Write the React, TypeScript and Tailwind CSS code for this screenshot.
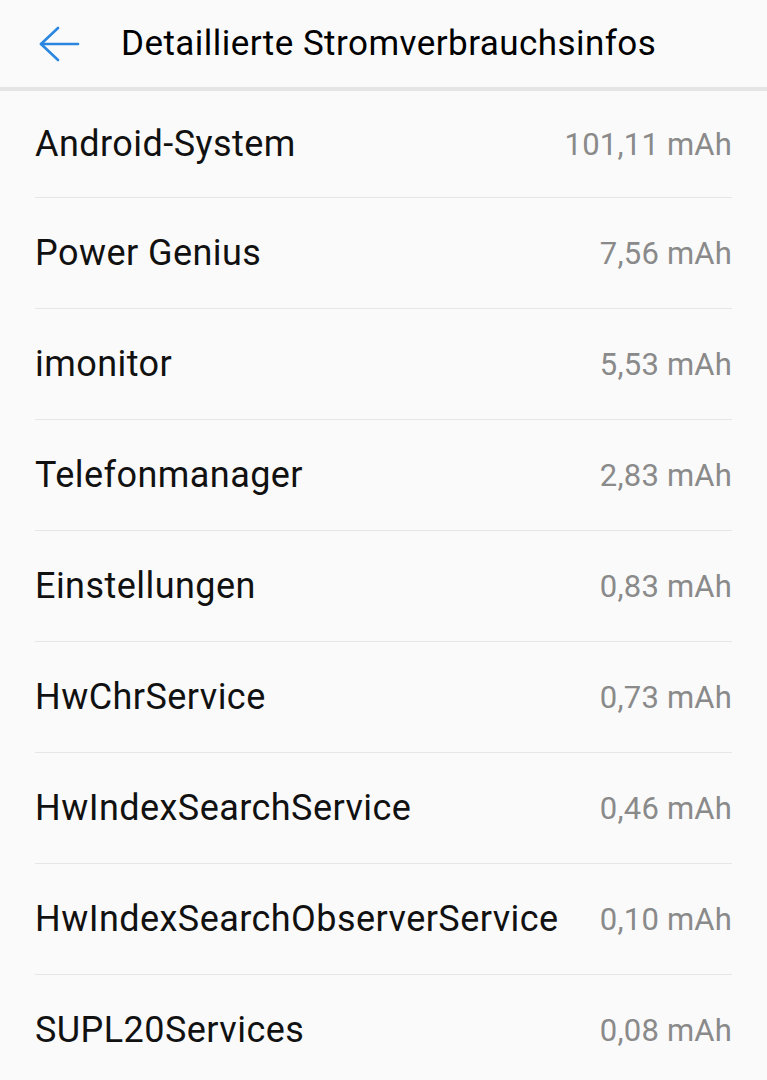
const rows: [string, string][] = [
  ["Android-System", "101,11 mAh"],
  ["Power Genius", "7,56 mAh"],
  ["imonitor", "5,53 mAh"],
  ["Telefonmanager", "2,83 mAh"],
  ["Einstellungen", "0,83 mAh"],
  ["HwChrService", "0,73 mAh"],
  ["HwIndexSearchService", "0,46 mAh"],
  ["HwIndexSearchObserverService", "0,10 mAh"],
  ["SUPL20Services", "0,08 mAh"],
];

export default function App() {
  return (
    <div className="w-[767px] h-[1080px] overflow-hidden bg-[#fafafa] font-['Roboto',sans-serif]">
      {/* Header */}
      <div className="h-[87px] flex items-center">
        <svg
          className="ml-[38px] w-[42px] h-[36px]"
          viewBox="0 0 42 36"
          fill="none"
          stroke="#2b86e0"
          strokeWidth="2.6"
          strokeLinecap="round"
          strokeLinejoin="round"
        >
          <path d="M20 2 L3 18 L20 34" />
          <path d="M3 18 H40" />
        </svg>
        <h1 className="ml-[41px] text-[35px] leading-none text-black tracking-[0.45px]">
          Detaillierte Stromverbrauchsinfos
        </h1>
      </div>
      <div className="h-[4px] bg-[#e4e4e4]" />

      {/* List */}
      <div className="px-[35px]">
        {rows.map(([name, value], i) => (
          <div
            key={name}
            className={
              i === 0
                ? "h-[106px] flex items-center justify-between"
                : "h-[111px] flex items-center justify-between border-t border-[#e6e6e6]"
            }
          >
            <span className="text-[36px] leading-none text-[#111] tracking-[0.45px]">{name}</span>
            <span className="text-[31px] leading-none text-[#8a8a8a] tracking-[0.2px]">{value}</span>
          </div>
        ))}
      </div>
    </div>
  );
}
